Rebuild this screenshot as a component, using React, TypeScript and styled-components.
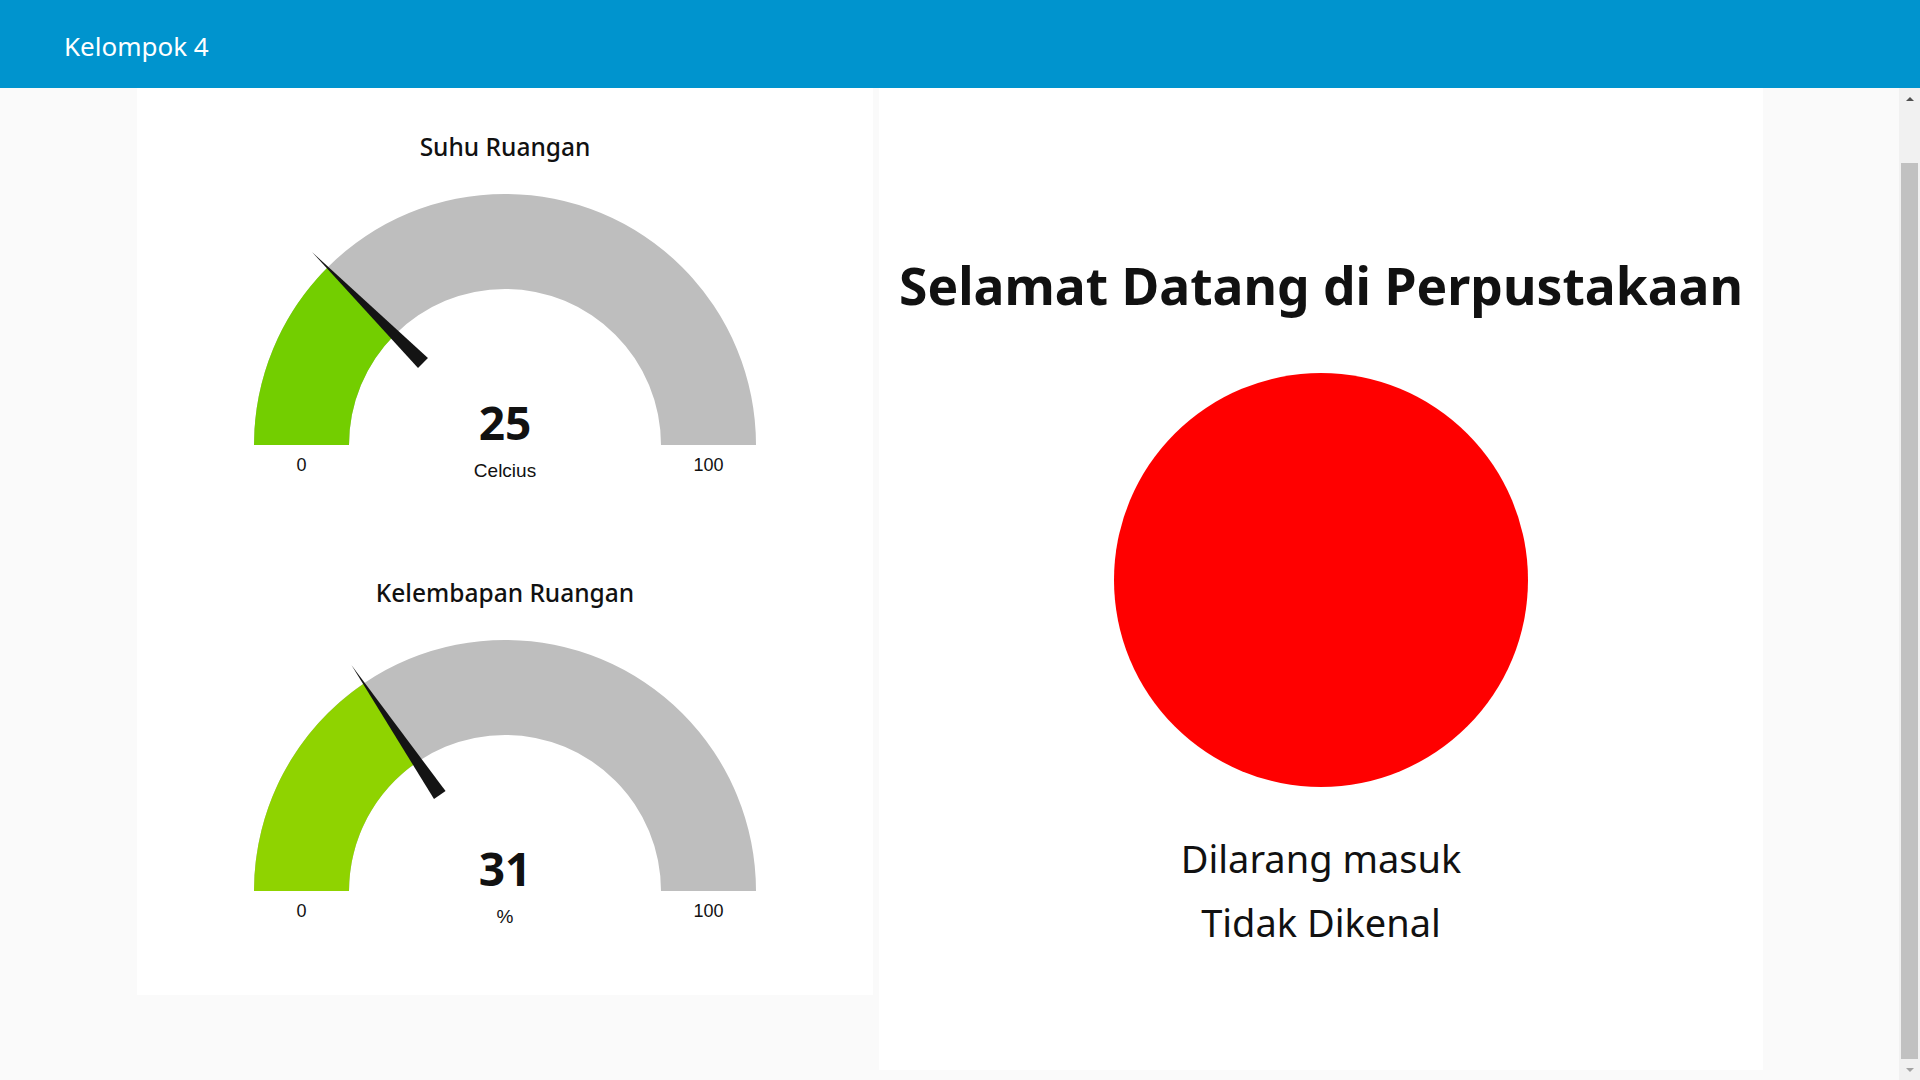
import React, { useLayoutEffect, useRef } from "react";
import styled, { createGlobalStyle } from "styled-components";

const GlobalStyle = createGlobalStyle`
  html, body {
    margin: 0;
    padding: 0;
    height: 100%;
    overflow: hidden;
    background: #fafafa;
  }
  body {
    font-family: "Noto Sans", "Open Sans", sans-serif;
    color: #111111;
  }
  #root {
    height: 100%;
  }
`;

const Shell = styled.div`
  height: 100vh;
  display: flex;
  flex-direction: column;
`;

const Toolbar = styled.header`
  flex: 0 0 88px;
  height: 88px;
  box-sizing: border-box;
  background: #0094ce;
  display: flex;
  align-items: center;
  padding: 3px 0 0 64px;
`;

const AppTitle = styled.h1`
  margin: 0;
  font-size: 26px;
  font-weight: 400;
  line-height: normal;
  color: #ffffff;
`;

const Viewport = styled.div`
  flex: 1;
  min-height: 0;
  display: flex;
`;

const Content = styled.main`
  flex: 1;
  min-width: 0;
  overflow-y: scroll;
  background: #fafafa;
  scrollbar-width: none;

  &::-webkit-scrollbar {
    display: none;
  }
`;

const ScrollRail = styled.div`
  flex: 0 0 21px;
  width: 21px;
  background: #f1f1f1;
  display: flex;
  flex-direction: column;
  align-items: center;
`;

const RailButton = styled.div`
  flex: 0 0 21px;
  height: 21px;
  width: 21px;
  display: flex;
  align-items: center;
  justify-content: center;
`;

const Arrow = styled.span<{ $dir: "up" | "down"; $color: string }>`
  width: 0;
  height: 0;
  border-left: 4.5px solid transparent;
  border-right: 4.5px solid transparent;
  ${(p) =>
    p.$dir === "up"
      ? `border-bottom: 4px solid ${p.$color};`
      : `border-top: 4px solid ${p.$color};`}
`;

const RailThumb = styled.div`
  flex: 1;
  width: 17px;
  margin-top: 54px;
  background: #c1c1c1;
`;

const CardRow = styled.div`
  display: flex;
  align-items: flex-start;
  gap: 6px;
  padding: 10px 0 10px 137px;
`;

const GaugeGroup = styled.section`
  width: 736px;
  height: 961px;
  box-sizing: border-box;
  background: #ffffff;
  padding-top: 98px;
  display: flex;
  flex-direction: column;
  gap: 83px;
`;

const GaugeWidget = styled.div`
  display: flex;
  flex-direction: column;
  align-items: center;
  gap: 13px;
`;

const GaugeTitle = styled.h2`
  margin: 0;
  height: 30px;
  font-size: 24.5px;
  line-height: 30px;
  font-weight: 500;
  color: #111111;
`;

const GaugeSvg = styled.svg`
  display: block;
  width: 736px;
  height: 320px;
`;

const ValueText = styled.text`
  font-family: "Noto Sans", "Open Sans", sans-serif;
  font-weight: 700;
  font-size: 46px;
  fill: #111111;
`;

const UnitText = styled.text`
  font-family: "Liberation Sans", Arial, sans-serif;
  font-size: 19px;
  fill: #111111;
`;

const LimitText = styled.text`
  font-family: "Liberation Sans", Arial, sans-serif;
  font-size: 18px;
  fill: #111111;
`;

const WelcomeGroup = styled.section`
  width: 884px;
  height: 1036px;
  box-sizing: border-box;
  background: #ffffff;
  padding-top: 219px;
  display: flex;
  flex-direction: column;
  align-items: center;
`;

const WelcomeTitle = styled.h1`
  margin: 0;
  font-size: 51.6px;
  line-height: 64px;
  font-weight: 700;
  color: #111111;
  white-space: nowrap;
`;

const StatusLamp = styled.div<{ $color: string }>`
  width: 414px;
  height: 414px;
  margin-top: 56px;
  border-radius: 50%;
  background: ${(p) => p.$color};
`;

const StatusLines = styled.div`
  margin-top: 39px;
  display: flex;
  flex-direction: column;
  align-items: center;
`;

const StatusLine = styled.p`
  margin: 0;
  font-size: 38px;
  line-height: 64px;
  font-weight: 400;
  color: #111111;
`;

const CX = 368;
const CY = 270;
const R_OUT = 251;
const R_IN = 156;

function pt(radius: number, deg: number): [number, number] {
  const a = (deg * Math.PI) / 180;
  return [CX + radius * Math.cos(a), CY - radius * Math.sin(a)];
}

function bandPath(endDeg: number): string {
  const [ox0, oy0] = pt(R_OUT, 180);
  const [ox1, oy1] = pt(R_OUT, endDeg);
  const [ix1, iy1] = pt(R_IN, endDeg);
  const [ix0, iy0] = pt(R_IN, 180);
  return `M ${ox0} ${oy0} A ${R_OUT} ${R_OUT} 0 0 1 ${ox1} ${oy1} L ${ix1} ${iy1} A ${R_IN} ${R_IN} 0 0 0 ${ix0} ${iy0} Z`;
}

function levelColor(pct: number): string {
  const stops = [
    [0, 181, 0],
    [230, 230, 0],
    [202, 56, 56],
  ];
  const lo = pct <= 0.5 ? stops[0] : stops[1];
  const hi = pct <= 0.5 ? stops[1] : stops[2];
  const t = pct <= 0.5 ? pct / 0.5 : (pct - 0.5) / 0.5;
  const c = lo.map((v, i) => Math.round(v + (hi[i] - v) * t));
  return `rgb(${c[0]}, ${c[1]}, ${c[2]})`;
}

function needlePoints(deg: number): string {
  const a = (deg * Math.PI) / 180;
  const nx = Math.sin(a);
  const ny = Math.cos(a);
  const [bx, by] = pt(116, deg);
  const [tx, ty] = pt(273, deg);
  const w = 7;
  return `${bx + nx * w},${by + ny * w} ${bx - nx * w},${by - ny * w} ${tx},${ty}`;
}

type GaugeProps = {
  title: string;
  value: number;
  unit: string;
  min?: number;
  max?: number;
};

function Gauge({ title, value, unit, min = 0, max = 100 }: GaugeProps) {
  const pct = (value - min) / (max - min);
  const deg = 180 - pct * 180;
  return (
    <GaugeWidget>
      <GaugeTitle>{title}</GaugeTitle>
      <GaugeSvg viewBox="0 0 736 320">
        <path d={bandPath(0)} fill="#bebebe" />
        <path d={bandPath(deg)} fill={levelColor(pct)} />
        <polygon points={needlePoints(deg)} fill="#141414" />
        <ValueText x={CX} y={CY - 5.5} textAnchor="middle">
          {value}
        </ValueText>
        <UnitText x={CX} y={CY + 32.4} textAnchor="middle">
          {unit}
        </UnitText>
        <LimitText x={CX - (R_OUT + R_IN) / 2} y={CY + 25.7} textAnchor="middle">
          {min}
        </LimitText>
        <LimitText x={CX + (R_OUT + R_IN) / 2} y={CY + 25.7} textAnchor="middle">
          {max}
        </LimitText>
      </GaugeSvg>
    </GaugeWidget>
  );
}

export default function App() {
  const contentRef = useRef<HTMLElement>(null);

  useLayoutEffect(() => {
    if (contentRef.current) {
      contentRef.current.scrollTop = 64;
    }
  }, []);

  return (
    <>
      <GlobalStyle />
      <Shell>
        <Toolbar>
          <AppTitle>Kelompok 4</AppTitle>
        </Toolbar>
        <Viewport>
          <Content ref={contentRef}>
            <CardRow>
              <GaugeGroup>
                <Gauge title="Suhu Ruangan" value={25} unit="Celcius" />
                <Gauge title="Kelembapan Ruangan" value={31} unit="%" />
              </GaugeGroup>
              <WelcomeGroup>
                <WelcomeTitle>Selamat Datang di Perpustakaan</WelcomeTitle>
                <StatusLamp $color="#ff0000" />
                <StatusLines>
                  <StatusLine>Dilarang masuk</StatusLine>
                  <StatusLine>Tidak Dikenal</StatusLine>
                </StatusLines>
              </WelcomeGroup>
            </CardRow>
          </Content>
          <ScrollRail aria-hidden="true">
            <RailButton>
              <Arrow $dir="up" $color="#505050" />
            </RailButton>
            <RailThumb />
            <RailButton>
              <Arrow $dir="down" $color="#a3a3a3" />
            </RailButton>
          </ScrollRail>
        </Viewport>
      </Shell>
    </>
  );
}
